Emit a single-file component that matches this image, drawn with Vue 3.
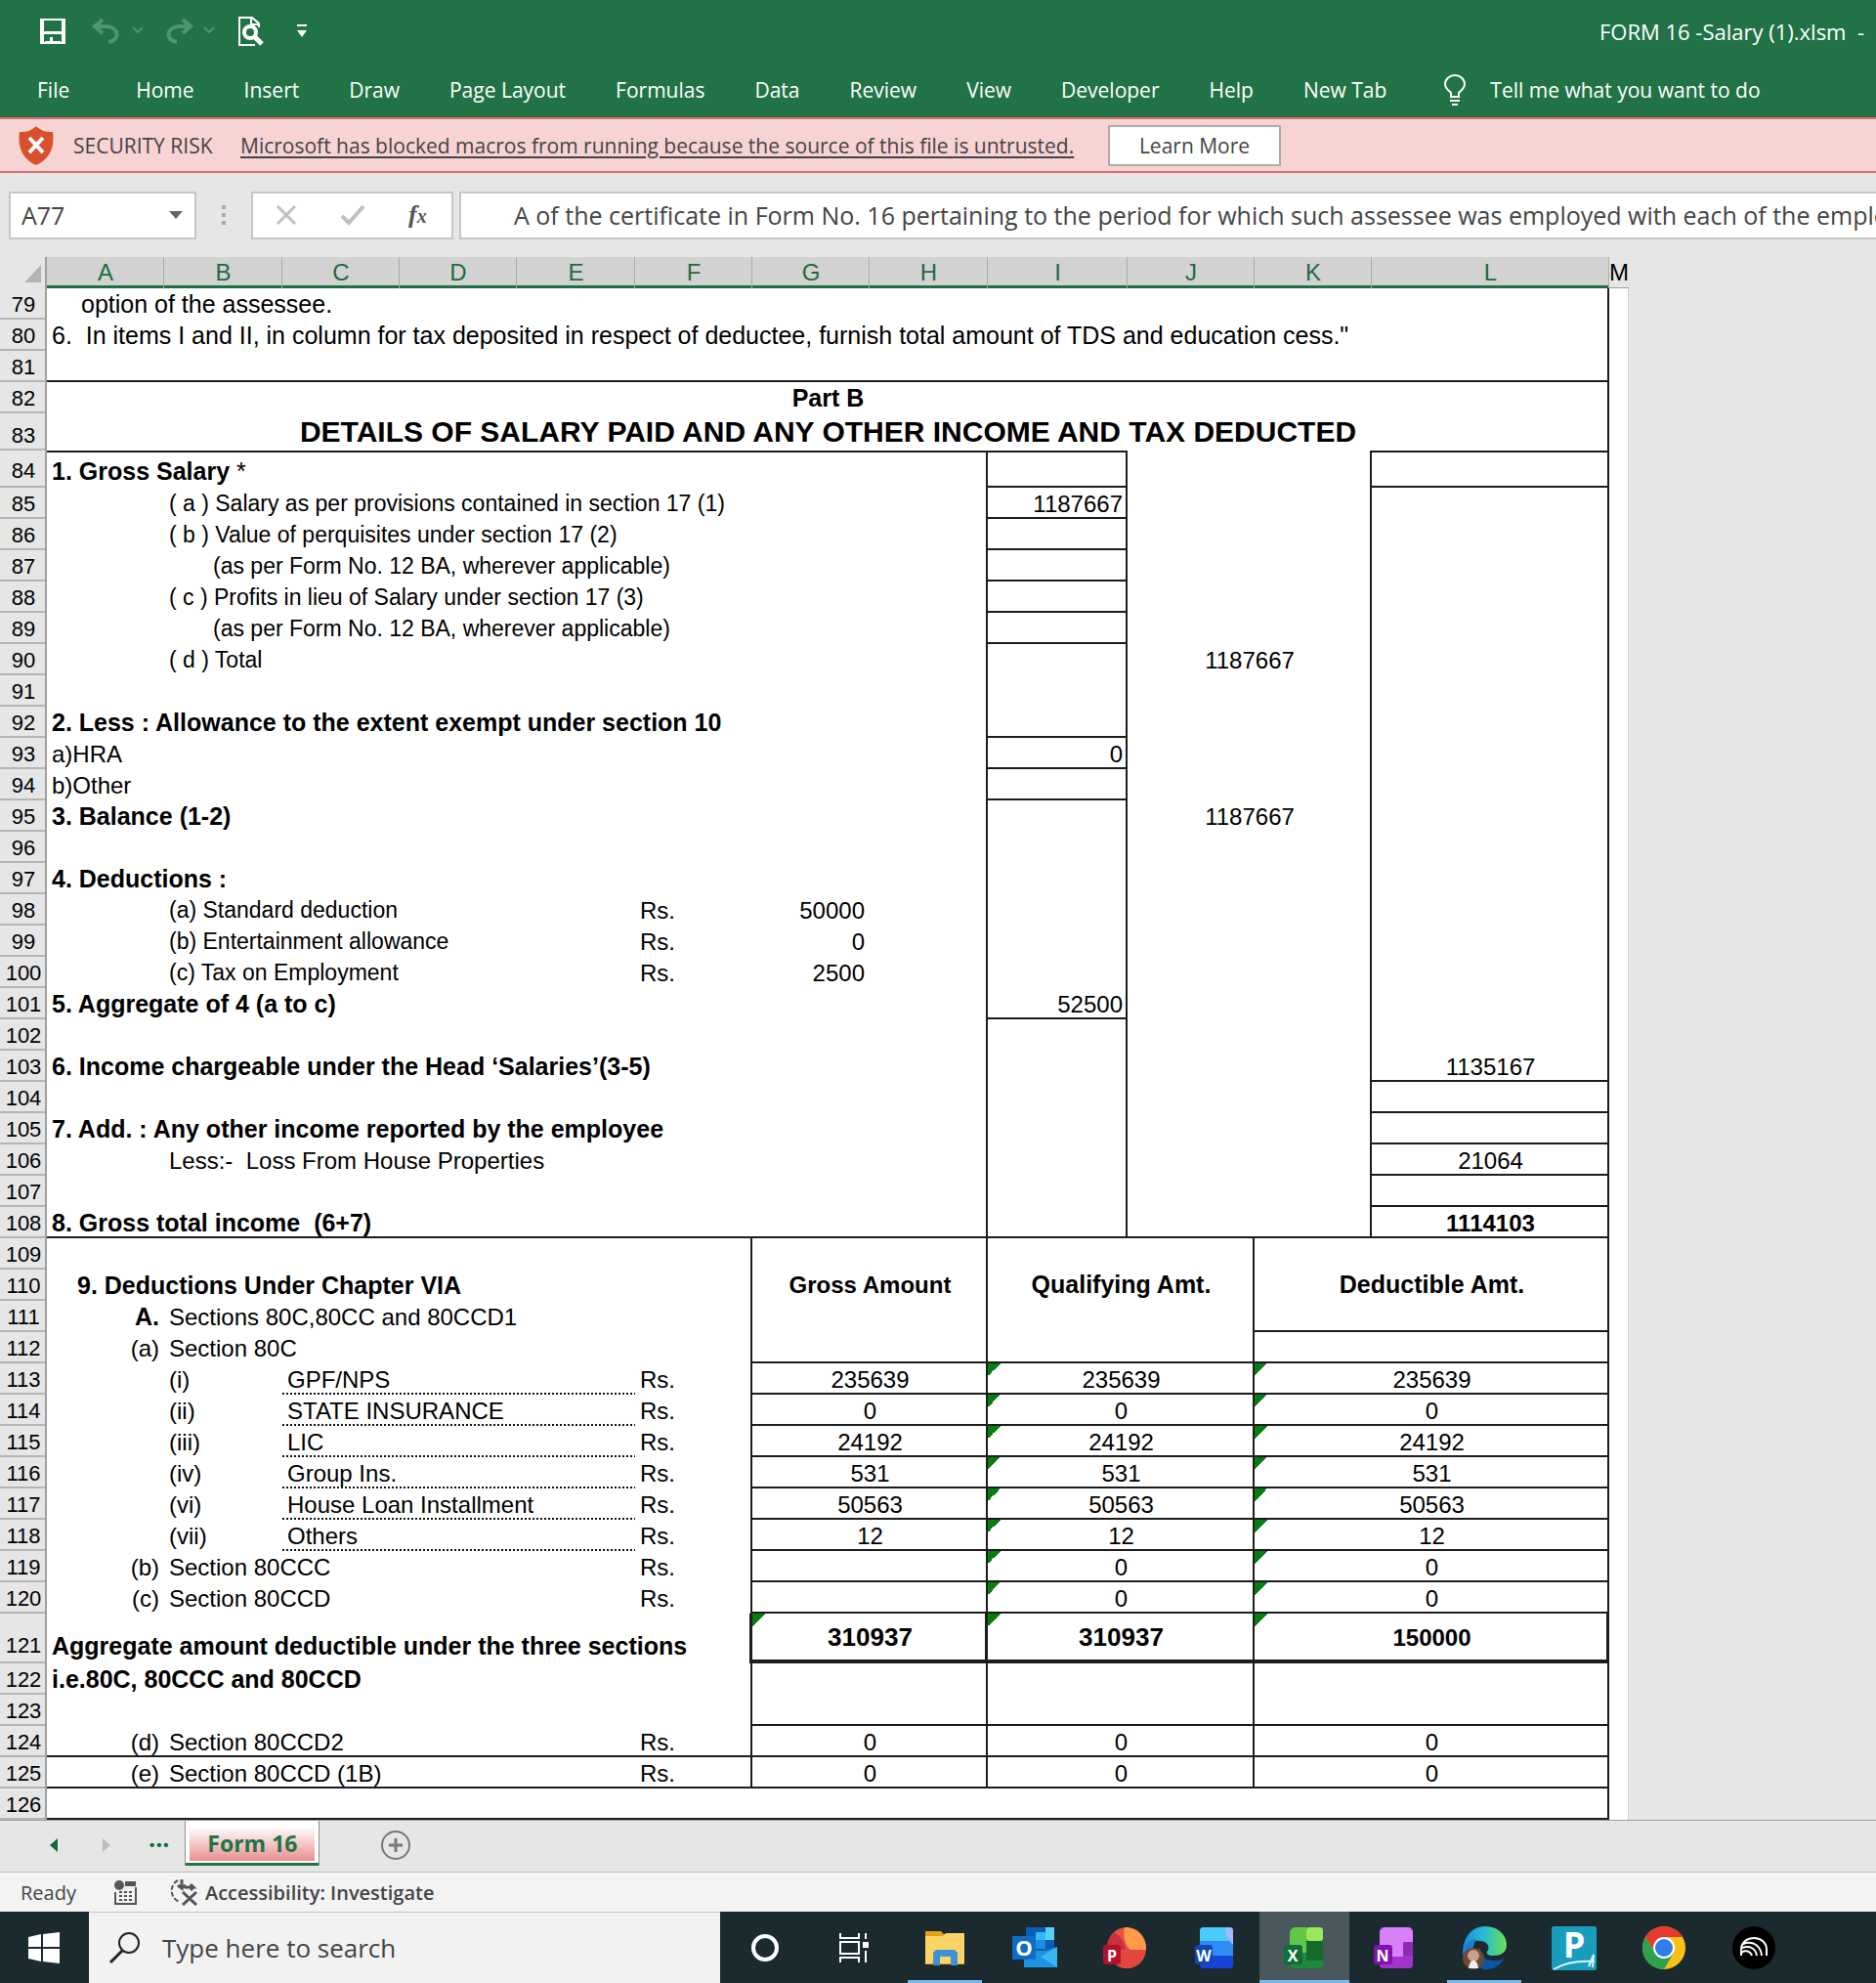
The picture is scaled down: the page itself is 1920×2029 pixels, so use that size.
<script setup>
import { ref } from 'vue'

const tabs = ['File', 'Home', 'Insert', 'Draw', 'Page Layout', 'Formulas', 'Data', 'Review', 'View', 'Developer', 'Help', 'New Tab']
const nameBox = ref('A77')
const formula = ref('A of the certificate in Form No. 16 pertaining to the period for which such assessee was employed with each of the employers.')
const search = ref('')

const columns = [
  ['A', 120], ['B', 121], ['C', 120], ['D', 120], ['E', 121], ['F', 120], ['G', 120],
  ['H', 121], ['I', 143], ['J', 130], ['K', 120], ['L', 243],
]

// A cell is [column span, text, classes, row span].
// Classes b / t / r draw the bottom, top and right line of the cell.
const tail = (value = '', l = '', i = '', iv = '') => [[1, iv, `r right ${i}`], [2, value, 'r center'], [1, l, 'r center']]
const line = (label, cls = '', i = 'b', iv = '') => [[1], [7, label, `r ${cls}`], ...tail('', '', i, iv)]
const head = (label, value = '', i = '') => [[8, label, 'r bold'], ...tail(value, '', i)]
const amounts = (a, b = a, c = a) => [[2, a, 'r b center'], [2, b, 'r b center flag'], [2, c, 'r b center flag']]
const item = (no, label, value) => [[1], [1, no], [3, label, 'dots'], [1, 'Rs.', 'r'], ...amounts(value)]
const section = (no, label, values, cls = '') => [[1, no, `right ${cls}`], [4, label, cls], [1, 'Rs.', `r ${cls}`], ...values]
const deduction = (label, value) => [[1], [4, label, 'small'], [1, 'Rs.'], [1, value, 'right'], [1, '', 'r'], ...tail()]
const zeros = [[2, '0', 'r b center'], [2, '0', 'r b center'], [2, '0', 'r b center']]

const rows = [
  { n: 79, cells: [[12, 'option of the assessee.', 'r in2 note']] },
  { n: 80, cells: [[12, '6.  In items I and II, in column for tax deposited in respect of deductee, furnish total amount of TDS and education cess."', 'r note']] },
  { n: 81, cells: [[12, '', 'r b']] },
  { n: 82, cells: [[12, 'Part B', 'r center bold']] },
  { n: 83, size: 'title-row', cells: [[12, 'DETAILS OF SALARY PAID AND ANY OTHER INCOME AND TAX DEDUCTED', 'r center bold title']] },
  { n: 84, size: 'first-row', cells: [[8, '1. Gross Salary', 'r t bold star'], [1, '', 'r t b'], [2, '', 'r'], [1, '', 'r t b']] },
  { n: 85, cells: line('( a ) Salary as per provisions contained in section 17 (1)', 'small', 'b', '1187667') },
  { n: 86, cells: line('( b ) Value of perquisites under section 17 (2)', 'small') },
  { n: 87, cells: line('(as per Form No. 12 BA, wherever applicable)', 'small in3') },
  { n: 88, cells: line('( c ) Profits in lieu of Salary under section 17 (3)', 'small') },
  { n: 89, cells: line('(as per Form No. 12 BA, wherever applicable)', 'small in3') },
  { n: 90, cells: [[1], [7, '( d ) Total', 'r small'], ...tail('1187667')] },
  { n: 91, cells: head('') },
  { n: 92, cells: head('2. Less : Allowance to the extent exempt under section 10', '', 'b') },
  { n: 93, cells: [[8, 'a)HRA', 'r'], ...tail('', '', 'b', '0')] },
  { n: 94, cells: [[8, 'b)Other', 'r'], ...tail('', '', 'b')] },
  { n: 95, cells: head('3. Balance (1-2)', '1187667') },
  { n: 96, cells: head('') },
  { n: 97, cells: head('4. Deductions :') },
  { n: 98, cells: deduction('(a) Standard deduction', '50000') },
  { n: 99, cells: deduction('(b) Entertainment allowance', '0') },
  { n: 100, cells: deduction('(c) Tax on Employment', '2500') },
  { n: 101, cells: [[8, '5. Aggregate of 4 (a to c)', 'r bold'], ...tail('', '', 'b', '52500')] },
  { n: 102, cells: head('') },
  { n: 103, cells: [[8, '6. Income chargeable under the Head ‘Salaries’(3-5)', 'r bold'], [1, '', 'r'], [2, '', 'r'], [1, '1135167', 'r b center']] },
  { n: 104, cells: [[8, '', 'r'], [1, '', 'r'], [2, '', 'r'], [1, '', 'r b']] },
  { n: 105, cells: [[8, '7. Add. : Any other income reported by the employee', 'r bold'], [1, '', 'r'], [2, '', 'r'], [1, '', 'r b']] },
  { n: 106, cells: [[1], [7, 'Less:-  Loss From House Properties', 'r'], [1, '', 'r'], [2, '', 'r'], [1, '21064', 'r b center']] },
  { n: 107, cells: [[8, '', 'r'], [1, '', 'r'], [2, '', 'r'], [1, '', 'r b']] },
  { n: 108, cells: [[8, '8. Gross total income  (6+7)', 'r b bold'], [1, '', 'r b'], [2, '', 'r b'], [1, '1114103', 'r b center bold total']] },
  { n: 109, cells: [[6, '', 'r'], [2, 'Gross Amount', 'r center middle bold total', 3], [2, 'Qualifying Amt.', 'r center middle bold', 3], [2, 'Deductible Amt.', 'r b center middle bold', 3]] },
  { n: 110, cells: [[6, '9. Deductions Under Chapter VIA', 'r in1 bold']] },
  { n: 111, cells: [[1, 'A.', 'right bold'], [5, 'Sections 80C,80CC and 80CCD1', 'r']] },
  { n: 112, cells: [[1, '(a)', 'right'], [5, 'Section 80C', 'r'], [2, '', 'r b'], [2, '', 'r b'], [2, '', 'r b']] },
  { n: 113, cells: item('(i)', 'GPF/NPS', '235639') },
  { n: 114, cells: item('(ii)', 'STATE INSURANCE', '0') },
  { n: 115, cells: item('(iii)', 'LIC', '24192') },
  { n: 116, cells: item('(iv)', 'Group Ins.', '531') },
  { n: 117, cells: item('(vi)', 'House Loan Installment', '50563') },
  { n: 118, cells: item('(vii)', 'Others', '12') },
  { n: 119, cells: section('(b)', 'Section 80CCC', amounts('', '0', '0')) },
  { n: 120, cells: section('(c)', 'Section 80CCD', amounts('', '0', '0')) },
  { n: 121, size: 'total-row', cells: [[6, 'Aggregate amount deductible under the three sections', 'r heavy-right bold'], [2, '310937', 'r b heavy heavy-right center middle bold sum flag'], [2, '310937', 'r b heavy center middle bold sum flag'], [2, '150000', 'r b heavy heavy-right center middle bold total flag']] },
  { n: 122, cells: [[6, 'i.e.80C, 80CCC and 80CCD', 'r bold'], [2, '', 'r b', 2], [2, '', 'r b', 2], [2, '', 'r b', 2]] },
  { n: 123, cells: [[6, '', 'r']] },
  { n: 124, cells: section('(d)', 'Section 80CCD2', zeros, 'b') },
  { n: 125, cells: section('(e)', 'Section 80CCD (1B)', zeros, 'b') },
  { n: 126, cells: [[12, '', 'r b']] },
]
</script>

<template>
  <div class="window">
    <header class="ribbon">
      <div class="titlebar">
        <div class="quick">
          <button aria-label="Save">
            <svg width="28" height="28" viewBox="0 0 28 28"><path d="M2 2h24v24H4l-2-2z" fill="none" stroke="#fff" stroke-width="2" /><path d="M1 14h26v3H1zM1 2h4v25H1zM23 2h4v25h-4zM6 24h16v3H6zM11 20h3v5h-3z" fill="#fff" /></svg>
          </button>
          <button class="undo" aria-label="Undo">
            <svg width="52" height="28" viewBox="0 0 52 28"><path d="m11 2-8 7 8 7M3 9h12c12 0 15 14 2 16" fill="none" stroke="#4f966e" stroke-width="4" /><path d="m42 10 5 5 5-5" fill="none" stroke="#4f966e" stroke-width="2" /></svg>
          </button>
          <button class="redo" aria-label="Redo">
            <svg width="52" height="28" viewBox="0 0 52 28"><path d="m19 2 8 7-8 7M27 9H15C3 9 0 23 13 25" fill="none" stroke="#4f966e" stroke-width="4" /><path d="m41 10 5 5 5-5" fill="none" stroke="#4f966e" stroke-width="2" /></svg>
          </button>
          <button class="preview" aria-label="Print preview">
            <svg width="28" height="32" viewBox="0 0 28 32"><path d="M18 30H2V2h13l7 6v4M14 2v7h8" fill="none" stroke="#fff" stroke-width="2" /><circle cx="13" cy="17" r="6" fill="none" stroke="#fff" stroke-width="4" /><path d="m18 22 7 7" stroke="#fff" stroke-width="5" /></svg>
          </button>
          <button class="more" aria-label="Customize Quick Access Toolbar">
            <svg width="12" height="14" viewBox="0 0 12 14"><path d="M1 0h10v2H1zM1 6h10l-5 7z" fill="#fff" /></svg>
          </button>
        </div>
        <span class="filename">FORM 16 -Salary (1).xlsm&nbsp; -</span>
      </div>
      <nav class="tabs">
        <button v-for="tab in tabs" :key="tab">{{ tab }}</button>
        <button class="tell">
          <svg width="24" height="32" viewBox="0 0 24 32"><path d="M8 23v-4C5 16 2 14 2 10a10 9 0 0 1 20 0c0 4-3 6-6 9v4zM7 27h10M9 31h6" fill="none" stroke="#fff" stroke-width="2" /></svg>
          Tell me what you want to do
        </button>
      </nav>
    </header>

    <section class="warning">
      <svg width="38" height="42" viewBox="0 0 38 42"><path d="M19 1c5 5 10 6 17 6 2 15-2 27-17 34C4 34 0 22 2 7c7 0 12-1 17-6z" fill="#d9512c" /><path d="m12 13 14 15M26 13 12 28" stroke="#fff" stroke-width="4" /></svg>
      <span class="risk">SECURITY RISK</span>
      <a href="#">Microsoft has blocked macros from running because the source of this file is untrusted.</a>
      <button>Learn More</button>
    </section>

    <section class="formula-bar">
      <div class="namebox">
        <input v-model="nameBox" aria-label="Name box">
        <svg width="14" height="10" viewBox="0 0 14 10"><path d="M0 1h14L7 9z" fill="#666" /></svg>
      </div>
      <svg class="grip" width="4" height="24" viewBox="0 0 4 24"><path d="M0 2h4v4H0zm0 8h4v4H0zm0 8h4v4H0z" fill="#aaa" /></svg>
      <div class="actions">
        <button aria-label="Cancel"><svg width="22" height="22" viewBox="0 0 22 22"><path d="m2 2 18 18M20 2 2 20" stroke="#c0c0c0" stroke-width="3" /></svg></button>
        <button aria-label="Enter"><svg width="26" height="22" viewBox="0 0 26 22"><path d="m2 12 7 7L24 2" fill="none" stroke="#c0c0c0" stroke-width="4" /></svg></button>
        <button class="fx" aria-label="Insert function">f<small>x</small></button>
      </div>
      <input v-model="formula" class="formula" aria-label="Formula bar">
    </section>

    <main class="sheet">
      <table>
        <colgroup>
          <col class="gutter">
          <col v-for="[name, width] in columns" :key="name" :style="{ width: width + 'px' }">
          <col class="last">
        </colgroup>
        <thead>
          <tr>
            <th class="corner" aria-label="Select all"><svg width="17" height="18" viewBox="0 0 17 18"><path d="M17 0v18H0z" fill="#b4b4b4" /></svg></th>
            <th v-for="[name] in columns" :key="name" scope="col">{{ name }}</th>
            <th class="plain" scope="col">M</th>
          </tr>
        </thead>
        <tbody>
          <tr v-for="row in rows" :key="row.n" :class="row.size">
            <th scope="row">{{ row.n }}</th>
            <td v-for="(cell, i) in row.cells" :key="i" :colspan="cell[0]" :rowspan="cell[3]" :class="cell[2]">{{ cell[1] }}</td>
            <td class="edge" />
          </tr>
        </tbody>
      </table>
    </main>

    <footer class="sheet-tabs">
      <button class="prev" aria-label="Previous sheet"><svg width="8" height="14" viewBox="0 0 8 14"><path d="M8 0v14L0 7z" fill="#0e6b3a" /></svg></button>
      <button class="next" aria-label="Next sheet"><svg width="8" height="14" viewBox="0 0 8 14"><path d="M0 0v14l8-7z" fill="#bdbdbd" /></svg></button>
      <button class="dots-more">...</button>
      <button class="active"><span>Form 16</span></button>
      <button class="add" aria-label="New sheet"><svg width="32" height="32" viewBox="0 0 32 32"><circle cx="16" cy="16" r="14" fill="none" stroke="#777" stroke-width="2" /><path d="M16 9v14M9 16h14" stroke="#777" stroke-width="3" /></svg></button>
    </footer>

    <section class="status">
      <span>Ready</span>
      <svg class="macro" width="24" height="26" viewBox="0 0 24 26"><circle cx="6" cy="6" r="5" fill="#555" /><path d="M12 2h11v5H12z" fill="#555" /><path d="M2 13v12h21V8" fill="none" stroke="#555" stroke-width="2" /><path d="M6 13h14M6 17h14M6 21h14" stroke="#555" stroke-width="2" stroke-dasharray="3 2" /></svg>
      <button class="access">
        <svg width="32" height="28" viewBox="0 0 32 28"><path d="M10 2a12 12 0 0 0 2 22" fill="none" stroke="#555" stroke-width="2" stroke-dasharray="5 2" /><path d="M14 1v9l-4-3m4 3 4-3M17 9h9l-3-3m3 3-3 3M15 14l14 13M29 14 15 27" fill="none" stroke="#555" stroke-width="3" /></svg>
        Accessibility: Investigate
      </button>
    </section>

    <nav class="taskbar">
      <button class="start" aria-label="Start"><svg width="32" height="32" viewBox="0 0 32 32"><path d="M0 5l13-3v13H0zM15 2l17-2v15H15zM0 17h13v13L0 27zM15 17h17v15l-17-2z" fill="#fff" /></svg></button>
      <label class="search">
        <svg width="34" height="34" viewBox="0 0 34 34"><circle cx="21" cy="12" r="10" fill="none" stroke="#222" stroke-width="2" /><path d="M14 20 2 32" stroke="#222" stroke-width="3" /></svg>
        <input v-model="search" placeholder="Type here to search" aria-label="Type here to search">
      </label>
      <button class="app" aria-label="Cortana"><svg width="46" height="46" viewBox="0 0 46 46"><circle cx="23" cy="23" r="12" fill="none" stroke="#fff" stroke-width="4" /></svg></button>
      <button class="app" aria-label="Task view"><svg width="46" height="46" viewBox="0 0 46 46"><path d="M8 8v5h19V8M8 38v-5h19v5M8 17h19v12H8zM34 8v6M34 26v12" fill="none" stroke="#fff" stroke-width="2" /><path d="M31 17h6v6h-6z" fill="#fff" /></svg></button>
      <button class="app open" aria-label="File Explorer"><svg width="46" height="46" viewBox="0 0 46 46"><path d="M3 6h16l3 3h21v31H3z" fill="#e3a21a" /><path d="M3 11h18l3-3h19v31H3z" fill="#fbd468" /><path d="M11 41V28l3-3h19l3 3v13h-7v-9H18v9z" fill="#3d92d6" /></svg></button>
      <button class="app" aria-label="Outlook"><svg width="46" height="46" viewBox="0 0 46 46"><path d="M14 2h29v24H14z" fill="#0a5fb4" /><path d="M24 7h19v8H24z" fill="#35b8f1" /><path d="M34 2h9v13h-9z" fill="#58d0f7" /><path d="M24 15h10v9H24z" fill="#1a8ee0" /><path d="M12 26h22l12-4v21H12z" fill="#1d93e3" /><path d="m46 22-17 10 17 11z" fill="#3cb4f4" /><path d="M0 11h24v24H0z" fill="#0f6cc4" /><text x="12" y="31" class="glyph big">O</text></svg></button>
      <button class="app" aria-label="PowerPoint"><svg width="46" height="46" viewBox="0 0 46 46"><ellipse cx="25" cy="23" rx="20" ry="21" fill="#e8513f" /><path d="M23 2c13 0 22 9 22 23H29c-6-5-8-14-6-23z" fill="#ff9a4d" /><path d="M12 7c6 4 11 10 12 18l21 0c-1 12-10 19-20 19C10 44 2 20 12 7z" fill="#e2473f" /><path d="M12 7c6 4 11 10 12 18L6 24C5 17 7 11 12 7z" fill="#c9303a" /><rect x="1" y="20" width="18" height="20" rx="3" fill="#b3122e" /><text x="10" y="37" class="glyph">P</text></svg></button>
      <button class="app" aria-label="Word"><svg width="46" height="46" viewBox="0 0 46 46"><rect x="8" y="2" width="34" height="42" rx="4" fill="#1545d8" /><path d="M8 6a4 4 0 0 1 4-4h26a4 4 0 0 1 4 4v25H8z" fill="#2f8cf5" /><path d="M8 6a4 4 0 0 1 4-4h26a4 4 0 0 1 4 4v10H8z" fill="#4ccbfb" /><path d="M34 2h4a4 4 0 0 1 4 4v14c-4-4-8-10-8-18z" fill="#a8b6fb" /><rect x="3" y="20" width="18" height="20" rx="3" fill="#1147b5" /><text x="12" y="37" class="glyph">W</text></svg></button>
      <button class="app open current" aria-label="Excel"><svg width="46" height="46" viewBox="0 0 46 46"><rect x="8" y="2" width="34" height="42" rx="4" fill="#1c8a3a" /><path d="M12 2h13v26H8V6z" fill="#62c744" /><rect x="25" y="2" width="17" height="14" rx="3" fill="#9be65a" /><path d="M25 16h17v20H25z" fill="#136b2c" /><rect x="2" y="20" width="19" height="20" rx="3" fill="#0f6e3a" /><text x="11" y="37" class="glyph">X</text></svg></button>
      <button class="app" aria-label="OneNote"><svg width="46" height="46" viewBox="0 0 46 46"><rect x="8" y="2" width="34" height="42" rx="4" fill="#a234cc" /><path d="M12 2h26l4 4v14l-10 4v8H8V6z" fill="#d880fa" /><path d="M32 17h10v14H32z" fill="#8f2ab8" /><rect x="2" y="20" width="19" height="20" rx="3" fill="#8312b0" /><text x="11" y="37" class="glyph">N</text></svg></button>
      <button class="app open" aria-label="Edge">
        <svg width="46" height="46" viewBox="0 0 46 46">
          <defs><linearGradient id="edge" x1="0" x2="1"><stop offset="0" stop-color="#1b8fdd" /><stop offset=".5" stop-color="#28bcd0" /><stop offset="1" stop-color="#6de04f" /></linearGradient></defs>
          <path d="M1 25C3 9 12 1 24 1c13 0 22 9 22 19 0 8-6 11-14 11-6 0-8-3-5-6 2-4-2-9-8-9C10 15 4 18 1 25z" fill="url(#edge)" />
          <path d="M1 25c3-8 8-11 15-11-8 8-5 24 9 29C8 45 0 36 1 25z" fill="#1681d3" />
          <path d="M19 22c-2 12 12 18 24 12-5 9-14 12-20 11-10-4-10-17-4-23z" fill="#0c57a4" />
          <circle cx="12" cy="34" r="11" fill="#6b4838" /><circle cx="12" cy="31" r="6" fill="#c9a18a" /><path d="M7 44c1-11 9-11 10 0z" fill="#f1ede9" />
        </svg>
      </button>
      <button class="app" aria-label="Publisher"><svg width="46" height="46" viewBox="0 0 46 46"><rect y="1" width="46" height="45" rx="2" fill="#189dbd" /><text x="23" y="33" class="glyph huge">P</text><path d="M2 45c10-6 24-9 42-8M38 42l5-12-1 13" fill="none" stroke="#d9f4fa" stroke-width="2" /></svg></button>
      <button class="app" aria-label="Chrome"><svg width="46" height="46" viewBox="0 0 46 46"><circle cx="23" cy="23" r="22" fill="#fbc116" /><path d="M4 12a22 22 0 0 1 38 0H23L14 28z" fill="#e33b2e" /><path d="M4 12a22 22 0 0 0 19 33l10-17-19 0z" fill="#2fa04c" /><circle cx="23" cy="23" r="11" fill="#fff" /><circle cx="23" cy="23" r="9" fill="#2f7de9" /></svg></button>
      <button class="app" aria-label="Music"><svg width="46" height="46" viewBox="0 0 46 46"><circle cx="23" cy="23" r="22" fill="#000" /><path d="M10 31V25c0-16 26-16 26 0v6M12 19c10-4 18 2 19 12M11 23c8-3 14 1 15 8M10 29c1-4 9-4 11 2" fill="none" stroke="#fff" stroke-width="2" /></svg></button>
    </nav>
  </div>
</template>

<style>
body {
  margin: 0;
  background: #e6e6e6;
}
</style>

<style scoped>
.window {
  overflow: hidden;
  background: #e6e6e6;
  font-family: "Open Sans", "Noto Sans", sans-serif;
  font-size: 21px;
  color: #444;
}
button,
input {
  box-sizing: border-box;
  padding: 0;
  border: 0;
  background: none;
  font: inherit;
  color: inherit;
  white-space: nowrap;
}
svg {
  display: block;
  flex: none;
}
.ribbon {
  background: #217346;
  color: #fff;
}
.titlebar {
  display: flex;
  justify-content: space-between;
  align-items: center;
  height: 64px;
  padding: 0 12px 0 40px;
}
.filename {
  font-size: 22px;
}
.quick {
  display: flex;
  align-items: center;
}
.undo { margin-left: 26px; }
.redo { margin-left: 22px; }
.preview { margin-left: 23px; }
.more { margin-left: 32px; }
.tabs {
  display: flex;
  align-items: center;
  gap: 51px;
  height: 56px;
  padding-left: 38px;
}
.tabs button:first-child {
  margin-right: 17px;
}
.tell {
  display: flex;
  align-items: center;
  gap: 24px;
  margin-left: 7px;
}
.warning {
  box-sizing: border-box;
  display: flex;
  align-items: center;
  height: 57px;
  padding-left: 18px;
  border-top: 2px solid #dd6b6f;
  border-bottom: 2px solid #dd6b6f;
  background: #f8d3d4;
}
.risk {
  width: 171px;
  margin-left: 19px;
}
.warning a {
  width: 866px;
  color: inherit;
  text-underline-offset: 3px;
}
.warning button {
  width: 177px;
  height: 42px;
  margin-left: 22px;
  border: 2px solid #ababab;
  background: #fff;
}
.formula-bar {
  display: flex;
  align-items: center;
  height: 86px;
  padding-left: 9px;
  font-size: 25px;
}
.namebox,
.actions,
.formula {
  box-sizing: border-box;
  height: 49px;
  border: 2px solid #c6c6c6;
  background: #fff;
}
.namebox {
  display: flex;
  align-items: center;
  width: 192px;
  padding: 0 12px 0 11px;
}
.namebox input {
  flex: 1;
  min-width: 0;
}
.grip {
  margin: 0 26px;
}
.actions {
  display: flex;
  align-items: center;
  gap: 44px;
  width: 207px;
  padding: 0 23px;
}
.fx {
  font: italic bold 26px "Liberation Serif", serif;
  color: #555;
}
.fx small {
  font-size: 20px;
}
.formula {
  flex: 1;
  min-width: 0;
  margin-left: 6px;
  padding-left: 54px;
  border-right: 0;
}
table {
  width: 1666px;
  table-layout: fixed;
  border-collapse: separate;
  border-spacing: 0;
  background: #fff;
  font-family: "Liberation Sans", Arial, sans-serif;
  font-size: 24px;
  line-height: 31px;
  color: #000;
}
.gutter { width: 48px; }
.last { width: 20px; }
th,
td {
  height: 32px;
  padding: 0;
  white-space: pre;
  vertical-align: bottom;
}
th {
  font-weight: 400;
}
thead th {
  background: #d2d2d2;
  color: #1e6b41;
  line-height: 32px;
  box-shadow: inset -1px 0 #ababab, inset 0 -3px #1d7044;
}
thead .corner {
  background: #e6e6e6;
  box-shadow: inset -2px 0 #9f9f9f;
}
.corner svg {
  margin: 0 0 6px 25px;
}
thead .plain {
  background: #e6e6e6;
  box-shadow: inset 0 -1px #9f9f9f;
  color: #000;
}
tbody th {
  background: #e6e6e6;
  box-shadow: inset -2px 0 #9f9f9f, inset 0 -2px #b4b4b4;
  font-size: 22px;
}
td {
  --bottom: transparent;
  --right: transparent;
  --top: transparent;
  --bottom-size: -2px;
  --right-size: -2px;
  padding: 0 5px;
  text-align: left;
  box-shadow: inset 0 var(--bottom-size) var(--bottom), inset var(--right-size) 0 var(--right), inset 0 2px var(--top);
}
.b { --bottom: #1c1c1c; }
.r { --right: #1c1c1c; }
.t { --top: #1c1c1c; }
.heavy { --bottom-size: -4px; }
.heavy-right { --right-size: -3px; }
.bold {
  font-size: 25px;
  font-weight: 700;
}
.note { font-size: 25px; }
.small { font-size: 23px; }
.total { font-size: 24px; }
.title {
  font-size: 30px;
  line-height: 38px;
}
.sum { font-size: 26px; }
.right { text-align: right; }
.center { text-align: center; }
.middle {
  padding-bottom: 2px;
  vertical-align: middle;
}
.in1 { padding-left: 31px; }
.in2 { padding-left: 35px; }
.in3 { padding-left: 50px; }
.flag {
  background: linear-gradient(135deg, #0a7d12 50%, transparent 50%) 0 0 / 13px 13px no-repeat;
}
.dots {
  background: repeating-linear-gradient(90deg, #111 0 2px, transparent 2px 4px) 0 100% / 100% 2px no-repeat;
}
.star::after {
  content: " *";
  font-weight: 400;
}
.title-row > * { height: 38px; }
.first-row > * {
  height: 38px;
  line-height: 34px;
}
.total-row > * { height: 49px; }
.total-row > th { height: 51px; }
.total-row th,
.total-row td:first-of-type {
  line-height: 36px;
}
.edge {
  box-shadow: inset -1px 0 #d0d0d0;
}
.sheet-tabs {
  box-sizing: border-box;
  display: flex;
  align-items: flex-start;
  height: 54px;
  border-top: 1px solid #9f9f9f;
  border-bottom: 1px solid #bdbdbd;
}
.prev { margin: 18px 0 0 51px; }
.next { margin: 18px 0 0 46px; }
.dots-more {
  margin: 0 0 0 39px;
  font-size: 25px;
  font-weight: 700;
  color: #0e6b3a;
}
.active {
  width: 138px;
  height: 46px;
  margin-left: 16px;
  padding: 4px;
  border: solid #8f8f8f;
  border-width: 0 1px;
  background: #fff;
  box-shadow: inset 0 -3px #217346;
  font-size: 23px;
  font-weight: 700;
  color: #217346;
}
.active span {
  display: block;
  height: 35px;
  background: linear-gradient(#fff, #e88e8e);
  line-height: 35px;
}
.add { margin: 9px 0 0 62px; }
.status {
  display: flex;
  align-items: center;
  height: 40px;
  padding-left: 21px;
  background: #f3f3f3;
  font-size: 20px;
}
.macro { margin-left: 38px; }
.access {
  display: flex;
  align-items: center;
  gap: 6px;
  margin-left: 32px;
  font-weight: 600;
}
.taskbar {
  display: flex;
  height: 73px;
  background: #1b2a2f;
}
.start {
  width: 91px;
  padding-left: 29px;
}
.search {
  box-sizing: border-box;
  display: flex;
  align-items: center;
  width: 646px;
  padding-left: 20px;
  border-top: 1px solid #c4c4c4;
  background: #f2f2f2;
}
.search input {
  flex: 1;
  min-width: 0;
  margin-left: 21px;
  font-size: 26px;
}
.search input::placeholder {
  color: #444;
  opacity: 1;
}
.app {
  display: flex;
  justify-content: center;
  align-items: center;
  width: 92px;
}
.app svg {
  overflow: visible;
}
.open {
  background: linear-gradient(#76b9ed, #76b9ed) 50% 100% / 76px 3px no-repeat;
}
.current {
  background: linear-gradient(#76b9ed, #76b9ed) 50% 100% / 100% 3px no-repeat #4a575c;
}
.glyph {
  fill: #fff;
  font: 700 16px "Open Sans", sans-serif;
  text-anchor: middle;
}
.glyph.big { font-size: 22px; }
.glyph.huge { font-size: 36px; }
</style>
